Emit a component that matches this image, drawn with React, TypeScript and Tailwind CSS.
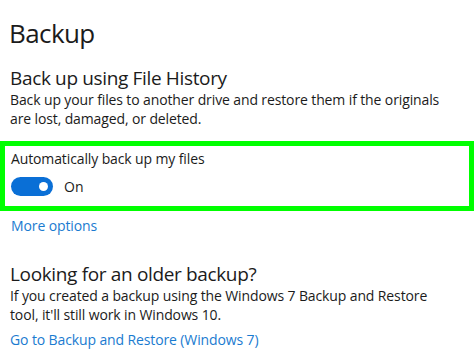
export default function App() {
  const font = { fontFamily: '"Open Sans", "Noto Sans", sans-serif' };
  return (
    <div
      className="h-[354px] w-[474px] overflow-hidden bg-white text-[#1b1b1b]"
      style={font}
    >
      {/* Page title */}
      <div className="px-[9px] pt-[16px]">
        <h1 className="text-[26px] leading-[34px] font-normal tracking-[-0.6px]">Backup</h1>
      </div>

      {/* File History */}
      <div className="mt-[16px] px-[10px]">
        <h2 className="text-[19px] leading-[24px] font-normal tracking-[-0.35px]">
          Back up using File History
        </h2>
        <p className="text-[14px] leading-[19px] tracking-[-0.12px]">
          Back up your files to another drive and restore them if the originals
          <br />
          are lost, damaged, or deleted.
        </p>
      </div>

      {/* Highlighted toggle */}
      <div className="mt-[13px] border-[5px] border-[#00ff00] px-[6px] pb-[10px] pt-[3px]">
        <p className="text-[14px] leading-[19px] tracking-[-0.12px]">Automatically back up my files</p>
        <div className="mt-[9px] flex items-center gap-[11px]">
          <div className="flex h-[19px] w-[42px] items-center justify-end rounded-full bg-[#0a6fd6] pr-[5px]">
            <div className="h-[9px] w-[9px] rounded-full bg-white" />
          </div>
          <span className="text-[14px] leading-[19px]">On</span>
        </div>
      </div>

      <div className="mt-[2px] px-[11px]">
        <a className="text-[14px] leading-[19px] tracking-[-0.12px] text-[#1a7bd0]">More options</a>
      </div>

      {/* Older backup */}
      <div className="mt-[25px] px-[10px]">
        <h2 className="text-[19px] leading-[24px] font-normal tracking-[-0.35px]">
          Looking for an older backup?
        </h2>
        <p className="text-[14px] leading-[19px] tracking-[-0.12px]">
          If you created a backup using the Windows 7 Backup and Restore
          <br />
          tool, it'll still work in Windows 10.
        </p>
        <a className="mt-[6px] block text-[14px] leading-[19px] tracking-[-0.12px] text-[#1a7bd0]">
          Go to Backup and Restore (Windows 7)
        </a>
      </div>
    </div>
  );
}
